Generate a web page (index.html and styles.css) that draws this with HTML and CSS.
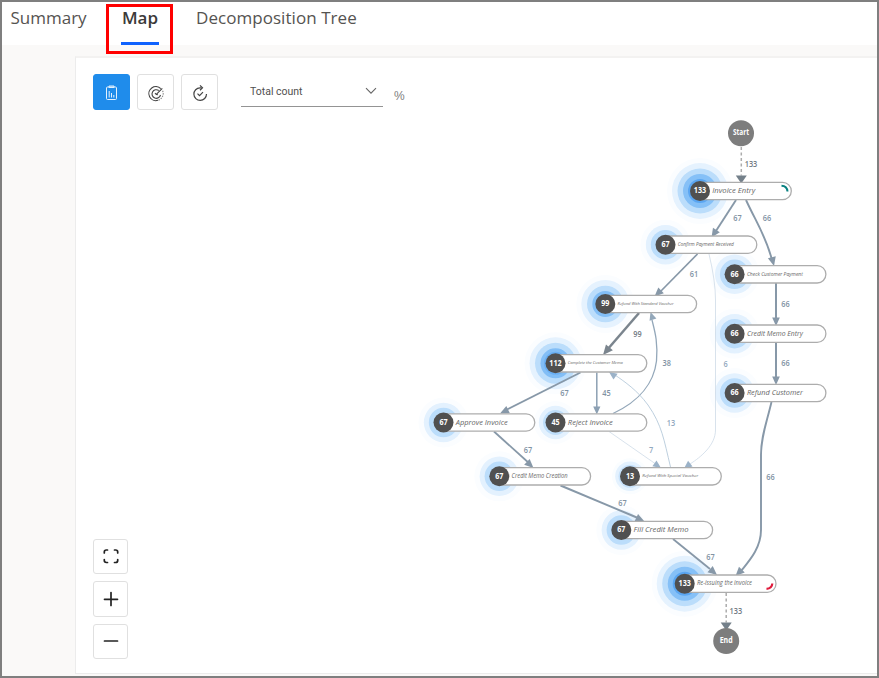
FILE: index.html
```html
<!DOCTYPE html>
<html lang="en">
<head>
<meta charset="utf-8">
<title>Process map</title>
<link rel="stylesheet" href="styles.css">
</head>
<body>
<div class="frame">
  <nav class="tabs">
    <a class="tab tab-summary">Summary</a>
    <a class="tab tab-map">Map</a>
    <a class="tab tab-tree">Decomposition Tree</a>
  </nav>
  <main class="content">
    <section class="panel">
      <div class="toolbar">
        <button class="btn active" aria-label="Report">
          <svg width="36" height="36" viewBox="0 0 36 36"><g fill="none" stroke="#e4f1fd"><rect x="12.500" y="13" width="10" height="12.500" rx="1"/><path d="M15 13.500v-1.500h5v1.500z"/><path d="M15.200 17v6.500M17.500 19v4.500M19.800 21v2.500" stroke-width="1"/></g></svg>
        </button>
        <button class="btn" aria-label="Target">
          <svg width="36" height="36" viewBox="0 -1 36 36"><g fill="none" stroke="#444" stroke-width="1.100"><path d="M22.800 13.700A7 7 0 1 0 20 25.300"/><path d="M24.600 15.700A7 7 0 0 1 20 25.300" stroke-dasharray="1.500 1" stroke="#888"/><path d="M20.800 15.500A4.300 4.300 0 1 0 22.500 20"/><path d="M18.300 19.400l6-6M17 18.200l1.300 1.400 1.700.2"/></g></svg>
        </button>
        <button class="btn" aria-label="Rework">
          <svg width="36" height="36" viewBox="0 -1 36 36"><g fill="none" stroke="#444" stroke-width="1.200"><path d="M19.500 12.800h-1.500a6.300 6.300 0 1 0 6.500 6.300"/><path d="M18 10.300l2.500 2.500-2.500 2.400M15.500 18.700l2 2 3.500-3.600"/></g></svg>
        </button>
        <div class="select"><span>Total count</span><svg width="12" height="8" viewBox="0 0 12 8"><path d="M1 1.200l5 5 5-5" fill="none" stroke="#666" stroke-width="1.100"/></svg></div>
        <span class="percent">%</span>
      </div>
      <div class="zoombar">
        <button class="zbtn" aria-label="Fit"><svg width="18" height="18" viewBox="0 0 18 18"><path d="M2.300 6V5Q2.300 3 4.300 3H5.500M12.500 3H13.700Q15.700 3 15.700 5V6M15.700 12.500V13.500Q15.700 15.500 13.700 15.500H12.500M5.500 15.500H4.300Q2.300 15.500 2.300 13.500V12.500"/></svg></button>
        <button class="zbtn" aria-label="Zoom in"><svg width="18" height="18" viewBox="0 0 18 18"><path d="M9 2.500v13M2.500 9.300h13"/></svg></button>
        <button class="zbtn" aria-label="Zoom out"><svg width="18" height="18" viewBox="0 0 18 18"><path d="M2.500 9h13"/></svg></button>
      </div>
    </section>
  </main>
  <svg class="map" id="map" width="879" height="678" viewBox="0 0 879 678">
    <defs><filter id="glow" x="-50%" y="-50%" width="200%" height="200%"><feGaussianBlur stdDeviation="0.700"/></filter></defs>
  </svg>
  <div class="highlight"></div>
</div>
<script src="map.js"></script>
</body>
</html>
```
FILE: styles.css
```css
* { box-sizing: border-box; }
body { margin: 0; }
.frame {
  position: relative;
  width: 879px;
  height: 678px;
  border: 2px solid #7f7f7f;
  background: #faf9f8;
  overflow: hidden;
  display: flex;
  flex-direction: column;
  font-family: "Open Sans", "Noto Sans", sans-serif;
}
.tabs {
  height: 43px;
  flex: none;
  background: #fff;
  display: flex;
  align-items: flex-start;
  padding-left: 8.500px;
  color: #555351;
  font-size: 17px;
  line-height: 24px;
}
.tab { height: 43px; padding-top: 4px; white-space: nowrap; }
.tab-summary { width: 110.500px; }
.tab-map { width: 38px; font-weight: 600; color: #3b3a39; border-bottom: 3px solid #0f62fe; text-align: center; }
.tab-tree { margin-left: 37px; letter-spacing: 0.05px; }
.content { flex: 1; padding: 11px 0 2px 73px; display: flex; }
.panel {
  flex: 1;
  background: #fff;
  border: 1px solid #ececec;
  border-top: 2px solid #f3f2f1;
  border-right: 0;
  padding: 16px 0 14px 17px;
  display: flex;
  flex-direction: column;
  justify-content: space-between;
}
.toolbar { display: flex; align-items: flex-start; gap: 7px; }
.btn, .zbtn {
  border: 1px solid #e0e0e0;
  border-radius: 3px;
  background: #fff;
  padding: 0;
  display: flex;
  align-items: center;
  justify-content: center;
}
.btn { width: 37px; height: 36px; }
.btn svg { flex: none; }
.btn.active { background: #1f8ceb; border-color: #1f8ceb; }
.select {
  width: 142px;
  height: 33px;
  margin-left: 16px;
  padding: 2px 6px 0 9px;
  border-bottom: 1px solid #949494;
  display: flex;
  align-items: center;
  justify-content: space-between;
  font-family: Roboto, sans-serif;
  font-size: 10.500px;
  color: #505050;
}
.percent { margin: 14px 0 0 4px; font: 12px/16px "Liberation Sans", sans-serif; color: #808080; }
.zoombar { display: flex; flex-direction: column; gap: 7px; }
.zbtn { width: 35px; height: 35.500px; }
.zbtn path { fill: none; stroke: #222; stroke-width: 1.700; stroke-linecap: round; }
.highlight { position: absolute; left: 104px; top: 2px; width: 67px; height: 50px; border: 3px solid #f00; }
.map { position: absolute; left: -2px; top: -2px; pointer-events: none; }
.node-label { font-style: italic; fill: #666; }
.node-count { font-size: 8px; font-weight: 700; fill: #fff; text-anchor: middle; }
.edge-label { font-size: 8px; font-weight: 600; text-anchor: middle; }
.pill { fill: #fff; stroke: #adadad; stroke-width: 1.300; }
.terminal { fill: #7d7d7d; }
```
FILE: map.js
```js
const NS = 'http://www.w3.org/2000/svg';
const map = document.getElementById('map');

function add(tag, attrs, text) {
  const el = document.createElementNS(NS, tag);
  for (const key in attrs) el.setAttribute(key, attrs[key]);
  if (text) el.textContent = text;
  map.appendChild(el);
  return el;
}

// halo radii and colours, from outside in
const HALO = {
  high: [[33, '#fbfdff'], [28, '#e5f2fe'], [22.5, '#bbddfb'], [17, '#85c0f7'], [12, '#5aa6f2']],
  upper: [[31, '#fbfdff'], [26, '#e5f2fe'], [20.5, '#bbddfb'], [15, '#82bef6'], [11.5, '#6bb0f4']],
  nearHigh: [[29, '#fbfdff'], [24, '#e5f2fe'], [18.3, '#bbddfb'], [13, '#82bef6']],
  mid: [[25, '#fbfdff'], [19.700, '#e3f1fe'], [14.700, '#bbddfb']],
  low: [[21.5, '#fbfdff'], [16.7, '#e3f1fe'], [12.5, '#bfdffb']],
  least: [[18, '#fafdff'], [14.800, '#e3f1fe'], [11.5, '#c8e3fc']]
};
// count, label, badge centre x, centre y, label width, font size, halo
const nodes = [
  ['133', 'Invoice Entry', 700, 191, 43, 8, 'high'],
  ['67', 'Confirm Payment Received', 665.5, 244.700, 56, 5.400, 'mid'],
  ['66', 'Check Customer Payment', 734.6, 274.300, 56, 5.600, 'mid'],
  ['99', 'Refund With Standard Voucher', 605.300, 304, 56, 4, 'nearHigh'],
  ['66', 'Credit Memo Entry', 734.6, 333.700, 56, 7.200, 'mid'],
  ['112', 'Complete the Customer Memo', 555.500, 363.300, 55, 4.100, 'upper'],
  ['66', 'Refund Customer', 734.6, 393, 56, 7.2, 'mid'],
  ['67', 'Approve Invoice', 443.500, 422.500, 52, 7.900, 'mid'],
  ['45', 'Reject Invoice', 555.500, 422.500, 45, 7.900, 'low'],
  ['67', 'Credit Memo Creation', 499.300, 476.300, 56, 6.300, 'mid'],
  ['13', 'Refund With Special Voucher', 630, 476.300, 56, 4, 'least'],
  ['67', 'Fill Credit Memo', 621.300, 530, 55, 7.900, 'mid'],
  ['133', 'Re-issuing the invoice', 684.700, 583.700, 55, 6.200, 'high']
];

for (const n of nodes) {
  for (const [r, fill] of HALO[n[6]]) add('circle', { cx: n[2], cy: n[3], r, fill, filter: 'url(#glow)' });
}

// path, width, colour, arrow tip, arrow direction (degrees), arrow size
const edges = [
  ['M736 200L714 234', 1.900, '#8798a8', 711.5, 237.500, 123, 9],
  ['M746 200C756 222 766 236 772 260', 1.900, '#8798a8', 774, 266, 76, 9],
  ['M697.500 254L660 292', 1.700, '#8798a8', 654.500, 296.500, 137, 9],
  ['M776 283V320', 2, '#8798a8', 776, 326, 90, 8.500],
  ['M776 342.500V379', 2, '#8798a8', 776, 385, 90, 8.500],
  ['M639 313L607 350', 2.5, '#7b858e', 603, 355, 130, 10],
  ['M580.500 372.500L505 410.500', 1.800, '#8798a8', 500, 413.500, 154, 9],
  ['M596.800 372.500V409', 1.5, '#8ca0b3', 596.800, 414.500, 90, 8],
  ['M613 413.500C640 401 654 382 656.500 361C658 342 655 332 652 320', 1.300, '#93a7b9', 650.500, 312, -108, 8],
  ['M670.500 467C664 440 662 425 648 405C637 390 625 382 615 375', .9, '#b6c9da', 609, 372, -145, 8, '#9bb2c8'],
  ['M609 431.500L655 463.500', .8, '#cedbe7', 661, 468, 35, 8, '#9bb2c8'],
  ['M709 254Q715.500 281 715.500 300V430C715.500 445 701 457 690 464', .8, '#cedbe7', 684, 468.500, 142, 8, '#9bb2c8'],
  ['M494 431.500L530 464', 1.800, '#8798a8', 533.500, 468, 43, 9],
  ['M560.500 485.500L638 518', 1.900, '#8798a8', 644.500, 521.500, 25, 9],
  ['M673 539L710 569', 1.800, '#8798a8', 717, 575, 40, 9],
  ['M771.500 402C766 425 761 437 761 455V530C761 548 749 561 741 571', 1.900, '#8798a8', 735.500, 576, 135, 9]
];
for (const [d, width, color, x, y, angle, size, head] of edges) {
  add('path', { d, fill: 'none', stroke: color, 'stroke-width': width });
  add('path', {
    d: `M0 0L${-size} ${-size * .45}V${size * .45}Z`,
    fill: head || color,
    transform: `translate(${x} ${y}) rotate(${angle})`
  });
}
for (const [x, y1, y2] of [[741.300, 147, 182.500], [726.200, 593, 629.500]]) {
  add('path', { d: `M${x} ${y1}V${y2 - 7}`, stroke: '#acacac', 'stroke-width': 1.5, 'stroke-dasharray': '3 2.500' });
  add('path', { d: `M${x - 5.500} ${y2 - 7}h11l-5.500 8z`, fill: '#74808a' });
}

for (const [count, label, x, y, width, size] of nodes) {
  add('rect', { class: 'pill', x: x - 8, y: y - 8.700, width: 99.300, height: 17.400, rx: 8.700 });
  add('circle', { cx: x, cy: y, r: 10, fill: '#505050' });
  add('text', { class: 'node-count', x, y: y + 2.300, textLength: count.length * 4.100, lengthAdjust: 'spacingAndGlyphs' }, count);
  add('text', { class: 'node-label', x: x + 12.300, y: y + size * .28, 'font-size': size, textLength: width, lengthAdjust: 'spacingAndGlyphs' }, label);
}
add('path', { d: 'M781.500 185.800Q787 186 787.500 191.500', fill: 'none', stroke: '#078080', 'stroke-width': 2 });
add('path', { d: 'M766.500 588.800Q772 588.500 772.300 583.500', fill: 'none', stroke: '#e01b3c', 'stroke-width': 2.200 });

for (const [label, x, y, width] of [['Start', 741, 133.300, 16], ['End', 726.200, 641, 13]]) {
  add('circle', { class: 'terminal', cx: x, cy: y, r: 13 });
  add('text', { class: 'node-count', x, y: y + 1.800, textLength: width, lengthAdjust: 'spacingAndGlyphs' }, label);
}

const labels = [
  ['133', 751, 164.500, '#717a83'], ['67', 737.500, 218.500], ['66', 767, 218.500], ['61', 694, 274.500],
  ['66', 785.500, 304.500], ['99', 637.500, 334, '#6e7780'], ['66', 785.500, 363.700],
  ['38', 666.800, 363.700], ['6', 725.700, 364, '#91a8be'], ['67', 564.500, 393], ['45', 606.500, 393],
  ['13', 671, 423, '#91a8be'], ['7', 651, 450, '#91a8be'], ['67', 528, 450], ['67', 622.500, 503],
  ['67', 710.500, 557], ['66', 770.500, 477.300], ['133', 735.800, 611, '#717a83']
];
for (const [label, x, y, fill] of labels) {
  add('text', { class: 'edge-label', x, y: y + 2.700, fill: fill || '#8192a3', textLength: label.length * 4.200, lengthAdjust: 'spacingAndGlyphs' }, label);
}
```
